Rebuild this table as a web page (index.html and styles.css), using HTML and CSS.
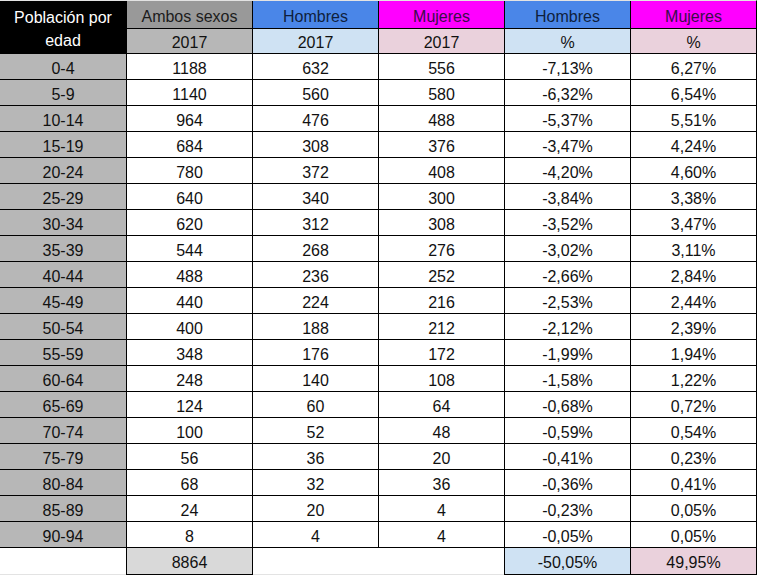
FILE: index.html
```html
<!DOCTYPE html>
<html lang="es">
<head>
<meta charset="utf-8">
<title>Población por edad</title>
<link rel="stylesheet" href="styles.css">
</head>
<body>
<div class="sheet">
  <div class="c h-title">Población por<br>edad</div>
  <div class="c h h-all">Ambos sexos</div>
  <div class="c h h-men">Hombres</div>
  <div class="c h h-women">Mujeres</div>
  <div class="c h h-men">Hombres</div>
  <div class="c h h-women">Mujeres</div>
  <div class="c s s-all">2017</div>
  <div class="c s s-men">2017</div>
  <div class="c s s-women">2017</div>
  <div class="c s s-men">%</div>
  <div class="c s s-women">%</div>

  <div class="c age">0-4</div><div class="c">1188</div><div class="c">632</div><div class="c">556</div><div class="c">-7,13%</div><div class="c">6,27%</div>
  <div class="c age">5-9</div><div class="c">1140</div><div class="c">560</div><div class="c">580</div><div class="c">-6,32%</div><div class="c">6,54%</div>
  <div class="c age">10-14</div><div class="c">964</div><div class="c">476</div><div class="c">488</div><div class="c">-5,37%</div><div class="c">5,51%</div>
  <div class="c age">15-19</div><div class="c">684</div><div class="c">308</div><div class="c">376</div><div class="c">-3,47%</div><div class="c">4,24%</div>
  <div class="c age">20-24</div><div class="c">780</div><div class="c">372</div><div class="c">408</div><div class="c">-4,20%</div><div class="c">4,60%</div>
  <div class="c age">25-29</div><div class="c">640</div><div class="c">340</div><div class="c">300</div><div class="c">-3,84%</div><div class="c">3,38%</div>
  <div class="c age">30-34</div><div class="c">620</div><div class="c">312</div><div class="c">308</div><div class="c">-3,52%</div><div class="c">3,47%</div>
  <div class="c age">35-39</div><div class="c">544</div><div class="c">268</div><div class="c">276</div><div class="c">-3,02%</div><div class="c">3,11%</div>
  <div class="c age">40-44</div><div class="c">488</div><div class="c">236</div><div class="c">252</div><div class="c">-2,66%</div><div class="c">2,84%</div>
  <div class="c age">45-49</div><div class="c">440</div><div class="c">224</div><div class="c">216</div><div class="c">-2,53%</div><div class="c">2,44%</div>
  <div class="c age">50-54</div><div class="c">400</div><div class="c">188</div><div class="c">212</div><div class="c">-2,12%</div><div class="c">2,39%</div>
  <div class="c age">55-59</div><div class="c">348</div><div class="c">176</div><div class="c">172</div><div class="c">-1,99%</div><div class="c">1,94%</div>
  <div class="c age">60-64</div><div class="c">248</div><div class="c">140</div><div class="c">108</div><div class="c">-1,58%</div><div class="c">1,22%</div>
  <div class="c age">65-69</div><div class="c">124</div><div class="c">60</div><div class="c">64</div><div class="c">-0,68%</div><div class="c">0,72%</div>
  <div class="c age">70-74</div><div class="c">100</div><div class="c">52</div><div class="c">48</div><div class="c">-0,59%</div><div class="c">0,54%</div>
  <div class="c age">75-79</div><div class="c">56</div><div class="c">36</div><div class="c">20</div><div class="c">-0,41%</div><div class="c">0,23%</div>
  <div class="c age">80-84</div><div class="c">68</div><div class="c">32</div><div class="c">36</div><div class="c">-0,36%</div><div class="c">0,41%</div>
  <div class="c age">85-89</div><div class="c">24</div><div class="c">20</div><div class="c">4</div><div class="c">-0,23%</div><div class="c">0,05%</div>
  <div class="c age">90-94</div><div class="c">8</div><div class="c">4</div><div class="c">4</div><div class="c">-0,05%</div><div class="c">0,05%</div>
</div>
<div class="totals">
  <div class="t"></div>
  <div class="t t-all">8864</div>
  <div class="t"></div>
  <div class="t"></div>
  <div class="t t-men">-50,05%</div>
  <div class="t t-women">49,95%</div>
</div>
</body>
</html>
```
FILE: styles.css
```css
html, body {
  margin: 0;
  padding: 0;
  background: #fff;
}

body {
  font-family: "Liberation Sans", Arial, sans-serif;
  font-size: 16px;
  color: #111;
}

.sheet {
  display: grid;
  grid-template-columns: 126px repeat(5, 125px);
  grid-template-rows: 27px 24px;
  grid-auto-rows: 25px;
  gap: 1px;
  width: max-content;
  background: #000;
  border: 1px solid #000;
  border-left: 0;
  border-top-color: #e3e3e3;
}

.c {
  background: #fff;
  display: flex;
  align-items: flex-end;
  justify-content: center;
  padding-bottom: 1px;
  line-height: 18px;
  white-space: nowrap;
}

.h-title {
  grid-row: span 2;
  background: #000;
  color: #fff;
  line-height: 23px;
  text-align: center;
  align-items: flex-start;
  padding-top: 5px;
  padding-bottom: 0;
}

.h {
  padding-bottom: 2px;
}

.h-all { background: #999999; color: #1c1c1c; }
.h-men { background: #4a86e8; color: #0f1f3d; }
.h-women { background: #ff00ff; color: #3a0d4a; }

.s {
  padding-bottom: 1px;
}

.s-all { background: #b7b7b7; }
.s-men { background: #cfe2f3; }
.s-women { background: #ead1dc; }

.age { background: #b7b7b7; }

.totals {
  display: grid;
  grid-template-columns: 126px repeat(5, 125px);
  column-gap: 1px;
  padding-right: 1px;
  width: max-content;
  height: 26px;
  border-bottom: 1px solid #e3e3e3;
}

.t {
  display: flex;
  align-items: flex-end;
  justify-content: center;
  line-height: 18px;
  padding-bottom: 2px;
}

.t-all, .t-men, .t-women {
  box-shadow: -1px 0 0 #000, 1px 0 0 #000, 0 1px 0 #000, -1px 1px 0 #000, 1px 1px 0 #000;
}

.t-all { background: #d9d9d9; }
.t-men { background: #cfe2f3; }
.t-women { background: #ead1dc; }
```
